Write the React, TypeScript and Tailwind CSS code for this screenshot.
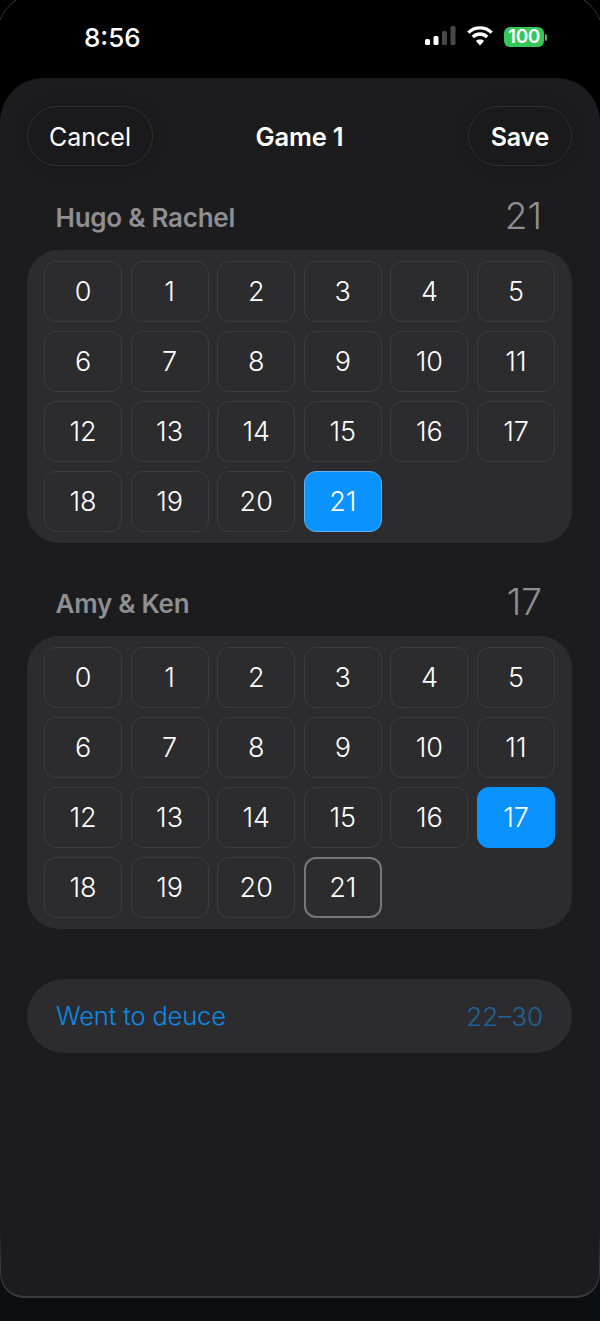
import React from "react";

const SCORES = Array.from({ length: 22 }, (_, i) => i);

function StatusIcons() {
  return (
    <div className="flex items-center">
      <svg width="32" height="22" viewBox="0 0 32 22" className="mr-[10px]">
        <rect x="0" y="14" width="5" height="6" rx="1.5" fill="#fff" />
        <rect x="8.5" y="11" width="5" height="9" rx="1.5" fill="#fff" />
        <rect x="17" y="6" width="5" height="14" rx="1.5" fill="#48484a" />
        <rect x="25.5" y="1" width="5" height="19" rx="1.5" fill="#48484a" />
      </svg>
      <svg width="26" height="22" viewBox="0 0 26 22" className="mr-[11px]">
        <path d="M1.3 7.6 C7.8 1.2 18.2 1.2 24.7 7.6" fill="none" stroke="#fff" strokeWidth="3.3" />
        <path d="M5.8 12 C10 8 16 8 20.2 12" fill="none" stroke="#fff" strokeWidth="3.3" />
        <path d="M13 20.4 L8.9 15.9 C11.2 14.1 14.8 14.1 17.1 15.9 Z" fill="#fff" />
      </svg>
      <div className="mt-[2px] flex h-[20px] w-[40px] items-center justify-center rounded-[6px] bg-[#34c759] text-[19px] font-semibold tracking-[-0.4px] text-white">
        100
      </div>
      <div className="mt-[2px] ml-[1px] h-[7px] w-[2px] rounded-r-sm bg-[#34c759]" />
    </div>
  );
}

function ScorePanel({ name, score, selected, limit }: { name: string; score: number; selected: number; limit?: number }) {
  return (
    <section>
      <div className="flex h-[84px] items-end justify-between pr-[58px] pb-[14px] pl-[55.5px]">
        <span className="text-[26px] leading-[36px] font-semibold tracking-[-0.25px] text-[#8e8e93]">{name}</span>
        <span className="text-[37px] leading-[40px] font-light text-[#8e8e93]">{score}</span>
      </div>
      <div className="mr-[28px] ml-[27px] grid grid-cols-6 gap-x-[8.6px] gap-y-[9px] rounded-[32px] bg-[#2c2c2e] px-[17px] py-[11px]">
        {SCORES.map((n) => {
          const isSelected = n === selected;
          const isLimit = n === limit;
          let tone = "border-[#3c3c3e]";
          if (isSelected) tone = n === 21 ? "border-[1.5px] border-[#62b0f5] bg-[#0a93ff]" : "border-[#0a93ff] bg-[#0a93ff]";
          else if (isLimit) tone = "border-2 border-[#77777a]";
          return (
            <div
              key={n}
              className={`flex h-[61px] items-center justify-center rounded-[12px] border pt-px text-[27px] font-[350] text-white ${tone}`}
            >
              {n}
            </div>
          );
        })}
      </div>
    </section>
  );
}

export default function App() {
  return (
    <div className="relative h-[1321px] w-[600px] overflow-hidden bg-[linear-gradient(#000_0_200px,#0b0f0f_200px)] font-['Inter','Liberation_Sans',sans-serif]">
      <div className="pointer-events-none absolute top-[-10px] left-[-5px] h-[50px] w-[610px] rounded-t-[50px] border-x border-t border-[#3a3d3d] [mask-image:linear-gradient(black_70%,transparent)]" />

      <header className="flex h-[78px] items-start justify-between pt-[20px] pr-[53px] pl-[84px]">
        <span className="text-[26px] leading-[36px] font-medium text-white">8:56</span>
        <div className="pt-[5px]">
          <StatusIcons />
        </div>
      </header>

      <main className="relative h-[1220px] rounded-t-[44px] rounded-b-[24px] bg-[#1c1c1e]">
        <div className="grid grid-cols-[1fr_auto_1fr] items-center pt-[28px] pr-[28px] pl-[27px]">
          <div className="flex h-[60px] w-[126px] items-center justify-center rounded-full border border-[#303032] bg-[#1a1a1c] pt-[3px] text-[25px] text-white shadow-[0_0_16px_rgba(0,0,0,0.12)]">
            Cancel
          </div>
          <h1 className="pt-[2px] text-[25.5px] font-semibold tracking-[-0.2px] text-white">Game 1</h1>
          <div className="flex h-[60px] w-[104px] items-center justify-center justify-self-end rounded-full border border-[#303032] bg-[#1a1a1c] pt-[3px] text-[25px] font-semibold tracking-[-0.2px] text-white shadow-[0_0_16px_rgba(0,0,0,0.12)]">
            Save
          </div>
        </div>

        <ScorePanel name="Hugo & Rachel" score={21} selected={21} />
        <div className="h-[9px]" />
        <ScorePanel name="Amy & Ken" score={17} selected={17} limit={21} />

        <div className="mt-[50px] mr-[28px] ml-[27px] flex h-[74px] items-center justify-between rounded-[37px] bg-[#2c2c2e] px-[29px]">
          <span className="text-[25.5px] font-[350] tracking-[-0.15px] text-[#0a8ae8]">Went to deuce</span>
          <span className="text-[26px] font-[350] text-[#20629e]">22–30</span>
        </div>

        <div className="pointer-events-none absolute inset-x-0 bottom-0 h-[70px] rounded-b-[24px] border-x border-b-2 border-[#3a3d3d] [mask-image:linear-gradient(transparent,black_60%)]" />
      </main>
    </div>
  );
}
